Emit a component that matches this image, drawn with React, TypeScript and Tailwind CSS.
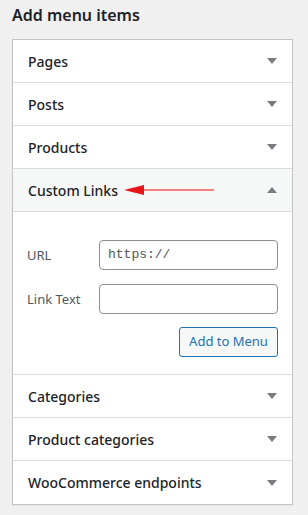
const Arrow = ({ up = false }: { up?: boolean }) => (
  <svg width="10" height="6" viewBox="0 0 10 6" className="shrink-0">
    {up ? <polygon points="0,6 10,6 5,0" fill="#787c82" /> : <polygon points="0,0 10,0 5,6" fill="#787c82" />}
  </svg>
);

const Row = ({ title, last = false }: { title: string; last?: boolean }) => (
  <div className={`flex h-[43px] items-center justify-between pl-[15px] pr-[15px] ${last ? "" : "border-b border-[#dcdcde]"}`}>
    <span className="text-[14px] font-medium text-[#1d2327]">{title}</span>
    <Arrow />
  </div>
);

const App = () => {
  return (
    <div className="min-h-[515px] w-[308px] bg-[#f0f0f1] pl-[12px] pr-[15px] pt-[3px]" style={{ fontFamily: '"Noto Sans", "Open Sans", sans-serif' }}>
      <h2 className="mb-[12px] text-[16px] font-semibold leading-[24px] text-[#1d2327]">Add menu items</h2>

      <div className="border border-[#c3c4c7] bg-white shadow-[0_1px_1px_rgba(0,0,0,0.04)]">
        <Row title="Pages" />
        <Row title="Posts" />
        <Row title="Products" />

        {/* open section */}
        <div className="flex h-[43px] items-center border-b border-[#dcdcde] bg-[#f6f7f7] pl-[15px] pr-[15px]">
          <span className="text-[14px] font-medium text-[#1d2327]">Custom Links</span>
          <svg width="92" height="12" viewBox="0 0 92 12" className="ml-[6px] shrink-0">
            <line x1="18" y1="6" x2="90" y2="6" stroke="#f05a5a" strokeWidth="1.5" />
            <polygon points="0,6 20,1 20,11" fill="#e8141a" />
          </svg>
          <div className="flex-1" />
          <Arrow up />
        </div>

        <div className="border-b border-[#dcdcde] px-[14px] pb-[17px] pt-[28px]">
          <div className="flex items-center">
            <label className="w-[72px] pt-[2px] text-[13px] text-[#50575e]">URL</label>
            <div className="flex h-[30px] flex-1 items-center rounded-[4px] border border-[#8c8f94] px-[8px] text-[13px] text-[#50575e]" style={{ fontFamily: '"Liberation Mono", "DejaVu Sans Mono", monospace' }}>
              https://
            </div>
          </div>
          <div className="mt-[14px] flex items-center">
            <label className="w-[72px] pt-[2px] text-[13px] text-[#50575e]">Link Text</label>
            <div className="h-[30px] flex-1 rounded-[4px] border border-[#8c8f94]" />
          </div>
          <div className="mt-[13px] flex justify-end">
            <button className="h-[30px] w-[99px] rounded-[3px] border border-[#2271b1] bg-[#f6f7f7] text-[13px] text-[#2271b1]">Add to Menu</button>
          </div>
        </div>

        <Row title="Categories" />
        <Row title="Product categories" />
        <Row title="WooCommerce endpoints" last />
      </div>
    </div>
  );
};

export default App;
